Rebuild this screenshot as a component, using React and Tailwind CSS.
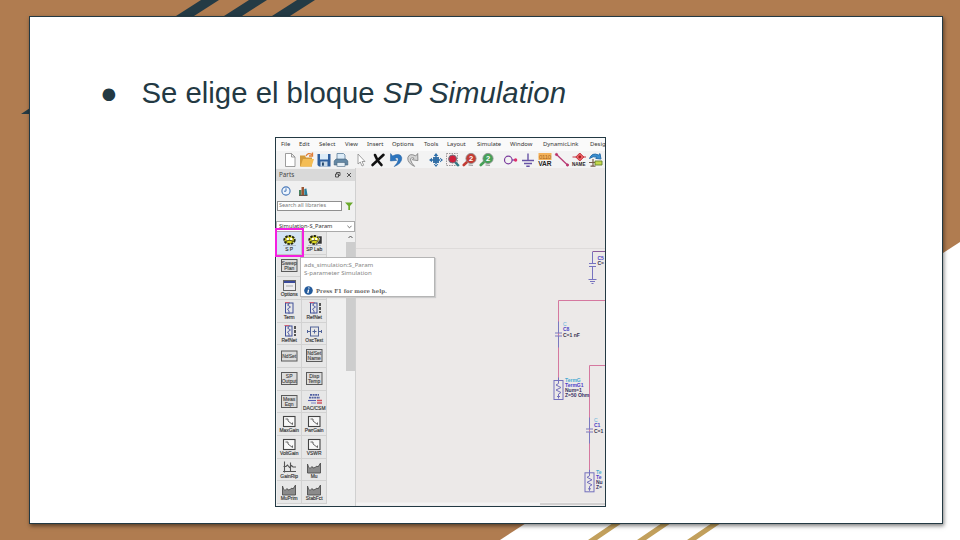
import React from "react";

const menus = [
  ["File", "w-[18px]"], ["Edit", "w-[20px]"], ["Select", "w-[26px]"], ["View", "w-[22px]"],
  ["Insert", "w-[25px]"], ["Options", "w-[32px]"], ["Tools", "w-[23px]"], ["Layout", "w-[30px]"],
  ["Simulate", "w-[33px]"], ["Window", "w-[33px]"], ["DynamicLink", "w-[47px]"], ["Desig", "w-[16px]"],
];

function Magnifier({ color, label }) {
  return (
    <g>
      <path d="M5.8 9.3 L1.8 13" stroke={color} strokeWidth="2.6" strokeLinecap="round" />
      <circle cx="9" cy="6.5" r="5.1" fill={color} stroke="#8b8b8b" strokeWidth=".8" />
      <text x="6.9" y="9.2" fontSize="7.5" fontWeight="bold" fill="#fff">{label}</text>
      <path d="M6.5 13 L11 13.3" stroke="#8d8d8d" strokeWidth="1" />
    </g>
  );
}

const tools = {
  page: <path d="M3.5 1.5 H9.5 L13 5 V14.5 H3.5 Z M9.5 1.5 V5 H13" fill="#fff" stroke="#858585" strokeWidth=".8" />,
  folder: (
    <g>
      <path d="M1 14.5 V3.5 H6 L7 5.5 H13 V14.5 Z" fill="#d39a3a" />
      <path d="M1.5 14.5 L4 7 H15 L12.5 14.5 Z" fill="#f4bd55" />
      <path d="M7 4 Q9 0 13 2.5 M13.5 .5 V4 H10" fill="none" stroke="#e07d35" strokeWidth="1.3" />
    </g>
  ),
  save: (
    <g>
      <path d="M1.5 2 H14.5 V14.5 H3 L1.5 13 Z" fill="#2e5f9e" />
      <rect x="4" y="2" width="8" height="5.5" fill="#dcecf8" />
      <rect x="4.5" y="9.5" width="7" height="5" fill="#c9d9e8" />
      <rect x="6" y="10.5" width="1.9" height="3.2" fill="#24496f" />
    </g>
  ),
  print: (
    <g>
      <path d="M4 7 V1.5 H10.5 L12 3 V7" fill="#dcecf8" stroke="#5d7e9a" strokeWidth=".8" />
      <path d="M3 7 H13 L14.8 9 V13 H1.2 V9 Z" fill="#6488a4" stroke="#3f6079" strokeWidth=".6" />
      <rect x="4" y="10.5" width="8" height="4" fill="#e7f0f6" stroke="#4d6c84" strokeWidth=".6" />
    </g>
  ),
  cursor: <path d="M5 2 V12 L7.3 10 L9 14 L10.7 13.2 L9 9.5 H12 Z" fill="#fff" stroke="#8a8a8a" strokeWidth=".8" />,
  del: <path d="M2.5 13 Q7 9 13.5 2.8 M5 3 Q7 9 11.5 13" fill="none" stroke="#111" strokeWidth="2.6" strokeLinecap="round" />,
  undo: <path d="M2.6 1.5 L2.4 9 L8.8 8.4 L7 6.4 Q10.6 4.8 10.2 8 Q9.8 11 6.2 14.6 Q14.2 11.2 13.8 5.8 Q12.5 .2 4.6 3.9 Z" fill="#2c75bf" stroke="#1f5a9a" strokeWidth=".5" />,
  redo: <path d="M12.7 1.5 L12.9 8.6 L7.4 7.8 L9 6.2 Q5.4 4.8 5.6 8 Q6.2 11 9.6 14.4 Q2.2 11 2.8 5.8 Q4.2 .6 10.8 3.9 Z" fill="#d4d4d4" stroke="#858585" strokeWidth=".9" />,
  move: (
    <g fill="#2e6ea8">
      <rect x="5" y="5" width="6" height="6" fill="#3f75a7" />
      <path d="M8 1 L10.3 4 H5.7 Z M8 15 L10.3 12 H5.7 Z M1 8 L4 5.7 V10.3 Z M15 8 L12 5.7 V10.3 Z M7.3 3 H8.7 V13 H7.3 Z M3 7.3 H13 V8.7 H3 Z" />
    </g>
  ),
  zoomArea: (
    <g>
      <rect x="1.5" y="1.5" width="11" height="12" fill="#f7eeee" stroke="#8f8f8f" strokeWidth=".9" strokeDasharray="1.5 1" />
      <path d="M10 10 L13.8 14" stroke="#2f7a86" strokeWidth="2.4" />
      <circle cx="7.6" cy="7" r="4" fill="#cf203a" stroke="#6b7782" strokeWidth="1" />
    </g>
  ),
  zoomIn: <Magnifier color="#c33c34" label="2" />,
  zoomOut: <Magnifier color="#46a157" label="2" />,
  port: (
    <g fill="none" stroke="#7a3a9c" strokeWidth="1.2">
      <circle cx="5.3" cy="8" r="3.8" /><path d="M9 8 H13" /><circle cx="12.6" cy="8" r="1.1" fill="#e0306c" stroke="#e0306c" />
    </g>
  ),
  ground: <path d="M8 1.5 V8 M2 8.5 H14 M4 11.5 H12 M6.3 14.3 H9.7" stroke="#6753a5" strokeWidth="1.4" />,
  variable: (
    <g>
      <rect x="1.5" y="1" width="13" height="7" fill="#f4b25a" />
      <text x="2" y="6.8" fontSize="6" textLength="12" fill="#a5651a">0110</text>
      <text x="1.2" y="14.4" fontSize="7" fontWeight="bold" textLength="13.4" lengthAdjust="spacingAndGlyphs" fill="#222">VAR</text>
    </g>
  ),
  wire: (
    <g stroke="#b73a75" fill="#c92d57"><path d="M2.5 2.5 L13.5 13" strokeWidth="1.3" /><circle cx="2.5" cy="2.5" r="1.1" /><circle cx="13.5" cy="13" r="1.1" /></g>
  ),
  name: (
    <g>
      <path d="M1.5 5 H15" stroke="#c53645" strokeWidth="1" />
      <path d="M8.8 1 L12.8 5 L8.8 9 L4.8 5 Z" fill="#ef686b" stroke="#c4303c" />
      <circle cx="8.8" cy="5" r="1.4" fill="#a52020" />
      <text x="1" y="14" fontSize="5.5" fontWeight="bold" textLength="13.5" lengthAdjust="spacingAndGlyphs" fill="#27191f">NAME</text>
    </g>
  ),
  rotate: (
    <g>
      <path d="M1.5 6.5 Q4 0 10.5 3 L12 1.6 L13 7 L7.8 6.4 L9 5.2 Q5 3.6 1.5 6.5 Z" fill="#398fd1" stroke="#2a70ac" strokeWidth="1" />
      <path d="M1 10.5 H7 M5 7 V14.5 M2.5 14.2 H7.5" stroke="#765b49" strokeWidth="1.2" />
      <path d="M7 9 H14 V13 H7 Z" fill="#c4d84a" stroke="#64852d" strokeWidth=".9" />
    </g>
  ),
};

const toolOrder = [
  ["page", "ml-[6px]"], ["folder", "ml-px"], ["save", "ml-px"], ["print", "ml-px"],
  ["cursor", "ml-[4px]"], ["del", "ml-px"], ["undo", "ml-[2px]"], ["redo", "ml-px"],
  ["move", "ml-[7px]"], ["zoomArea", "ml-px"], ["zoomIn", "ml-px"], ["zoomOut", "ml-px"],
  ["port", "ml-[8px]"], ["ground", "ml-px"], ["variable", "ml-px"], ["wire", "ml-px"],
  ["name", "ml-px"], ["rotate", "ml-px"],
];

const parts = [
  ["gear", "S P"], ["lab", "SP Lab"],
  ["box", "Sweep|Plan"], ["box", ""],
  ["window", "Options"], ["box", ""],
  ["term", "Term"], ["net", "RefNet"],
  ["net", "RefNet"], ["osc", "OscTest"],
  ["box", "NdSet"], ["box", "NdSet|Name"],
  ["box", "SP|Output"], ["box", "Disp|Temp"],
  ["box", "Meas|Eqn"], ["db", "DAC/CSM"],
  ["gain", "MaxGain"], ["gain", "PwrGain"],
  ["gain", "VoltGain"], ["gain", "VSWR"],
  ["ripple", "GainRip"], ["area", "Mu"],
  ["area", "MuPrim"], ["area", "StabFct"],
];

function PartGlyph({ kind }) {
  switch (kind) {
    case "gear":
    case "lab":
      return (
        <g>
          <ellipse cx="12.5" cy="8" rx="5.2" ry="4" fill="#d8d321" stroke="#25260f" strokeWidth="1.9" strokeDasharray="2.4 1" />
          <path d="M9 9.5 Q12.5 7 16 9.5" stroke="#4a4a15" strokeWidth="1.1" fill="none" />
          <circle cx="10.8" cy="7" r="1.2" fill="#fff" /><circle cx="14.2" cy="7" r="1.2" fill="#fff" />
          {kind === "lab" && <path d="M15.5 4 H20 V12 H14.5 L18 7 Z" fill="#333" stroke="#fff" strokeWidth=".5" />}
          <path d="M6 13.5 H19" stroke="#a9b4c4" strokeWidth=".8" />
        </g>
      );
    case "window":
      return (
        <g><rect x="6.5" y="3.5" width="12" height="10" fill="#ececf0" stroke="#666" /><path d="M7 5 H18" stroke="#39499b" strokeWidth="2" /><path d="M9 9 H16" stroke="#aaa" /></g>
      );
    case "term":
      return (
        <g fill="none"><rect x="8.5" y="3" width="7.5" height="10" stroke="#405098" /><path d="M12 2 V4 L10.5 5 L13.5 7 L10.5 9 L12 11 V14" stroke="#5963a8" /><path d="M8 2.5 H12.5" stroke="#cf5f75" /></g>
      );
    case "net":
      return (
        <g fill="none"><rect x="8.5" y="3" width="6.5" height="10" stroke="#405098" /><path d="M12 2 V4 L10.5 5 L13.5 7 L10.5 9 L12 11 V13.5" stroke="#5963a8" /><path d="M7.5 2.5 H12" stroke="#cf5f75" /><path d="M18 3 V13" stroke="#555" strokeWidth="2" strokeDasharray="3 1" /></g>
      );
    case "osc":
      return (
        <g fill="none" stroke="#526499"><rect x="8.5" y="4" width="8" height="9" /><path d="M5 8.5 H8 M17 8.5 H20 M10.5 8.5 H14.5 M12.5 6.5 V10.5" /><path d="M5.5 7 V10 M19.5 7 V10" /></g>
      );
    case "db":
      return (
        <g><path d="M8 3.8 H17 M7 6.6 H18" stroke="#5260a2" strokeWidth="1.8" strokeDasharray="2 .6" /><path d="M6 9.5 H14" stroke="#525baf" strokeWidth="1.1" /><path d="M15 9.5 H20 M15 12 H20" stroke="#ce5260" strokeWidth="1.6" /><path d="M9 12 H14" stroke="#7b83c4" /></g>
      );
    case "gain":
      return (
        <g fill="none"><rect x="6.5" y="3.5" width="11.5" height="10" fill="#f8f8f8" stroke="#444" strokeWidth="1.1" /><path d="M8.5 6 H11 V8 L15.5 11.5 M15.5 9.5 V11.5" stroke="#555" strokeWidth=".9" /></g>
      );
    case "ripple":
      return <path d="M7.5 2.5 V13.5 M6 12.5 H19 M13.5 3.5 V12 M6.5 7.5 H9 L10.5 6 L12.5 8.5 L14.5 6.5 L16 8 H19" fill="none" stroke="#555" strokeWidth="1.1" />;
    case "area":
      return <path d="M5.5 14 V5 L6.5 8 L8 9.5 L10 7.5 L11 9 L13 8.5 L15 7 L16 8 L18.5 4 V14 Z" fill="#8b8b8b" stroke="#4f4f4f" strokeWidth=".9" />;
    default:
      return null;
  }
}

function Part({ kind, label, active }) {
  const lines = label.split("|");
  const single = kind === "box" && lines.length === 1 && label !== "";
  return (
    <div className={active ? "bg-[#d4e4f5] border-r border-b border-[#c4c4c4]" : "bg-[#e7e7e7] border-r border-b border-[#d2d2d2]"}>
      <svg viewBox="0 0 24 22" className="block h-[22px] w-[24px]" fontFamily="Liberation Sans, sans-serif">
        {kind === "box" ? (
          <g fontSize="5" fill="#3f3f3f" stroke="#3f3f3f" strokeWidth=".12" textAnchor="middle">
            <rect x="4.5" y={single ? 6 : 4.5} width="15.5" height={single ? 10 : 12} fill="#dcdcdc" stroke="#5a5a5a" strokeWidth="1" />
            {lines.map((line, i) => (
              <text key={line} x="12.2" y={single ? 12.8 : 9.6 + i * 5.1}>{line}</text>
            ))}
          </g>
        ) : (
          <g>
            <PartGlyph kind={kind} />
            <text x="12.2" y="19.2" fontSize="4.9" textAnchor="middle" fill="#333" stroke="#333" strokeWidth=".15">{label}</text>
          </g>
        )}
      </svg>
    </div>
  );
}

function Terminal({ x, y, lines }) {
  const colors = ["#49a9d1", "#4e42c8", "#373062", "#373062"];
  return (
    <g transform={`translate(${x} ${y})`}>
      <g fill="none" stroke="#7470bd" strokeWidth="1">
        <rect x="-4.5" y="0" width="9" height="19" />
        <path d="M0 -3 V3 L-2.5 4.5 L2.5 7 L-2.5 9.5 L2.5 12 L0 13.5 V18 M-1.5 16 H1.5" />
      </g>
      <g fontSize="5" fontWeight="bold">
        {lines.map((line, i) => (
          <text key={i} x="6.5" y={1.5 + i * 5} fill={colors[i]}>{line}</text>
        ))}
      </g>
    </g>
  );
}

function Capacitor({ x, y, name, value }) {
  return (
    <g transform={`translate(${x} ${y})`}>
      <path d="M0 -13 V-1.5 M-3.5 -1.5 H3.5 M-3.5 1.5 H3.5 M0 1.5 V13" stroke="#7b78bf" fill="none" />
      <g fontSize="5">
        <text x="4.5" y="-8.5" fill="#62b3da">C</text>
        <text x="4.5" y="-3.4" fill="#4b43c5" fontWeight="bold">{name}</text>
        <text x="4.5" y="2" fill="#38324f" fontWeight="bold">{value}</text>
      </g>
    </g>
  );
}

function Schematic() {
  return (
    <svg viewBox="356 168 249 338" className="block h-[338px] w-[249px] bg-[#ece9e8]" fontFamily="Liberation Sans, sans-serif">
      <path d="M356 248.5 H605" stroke="#dedbda" />
      <path d="M605 251.5 H592.5" stroke="#8a5b9b" fill="none" />
      <path d="M592.5 252 V263 M589 263.5 H596 M589 266.5 H596 M592.5 267 V279 M588.5 279.5 H596.5 M590 281.5 H595 M591.5 283.5 H593.5" stroke="#7773bf" fill="none" />
      <g fontSize="5" fontWeight="bold">
        <text x="597.5" y="260" fill="#4b43c5">C5</text><text x="597.5" y="265.2" fill="#38324f">C=</text>
      </g>
      <path d="M605 300.5 H558.5 V378" fill="none" stroke="#d5789f" />
      <path d="M605 365.5 H589.5 V472" fill="none" stroke="#d5789f" />
      <Capacitor x={558.5} y={334.5} name="C8" value="C=1 nF" />
      <Capacitor x={589.5} y={430.5} name="C1" value="C=1" />
      <Terminal x={558.5} y={380.5} lines={["TermG", "TermG1", "Num=1", "Z=50 Ohm"]} />
      <Terminal x={589.5} y={472.8} lines={["Te", "Te", "Nu", "Z="]} />
      <path d="M356 504 H605" stroke="#f4f3f3" strokeWidth="3" />
      <path d="M540 504 H605" stroke="#c7c5c5" strokeWidth="1.6" />
    </svg>
  );
}

function PartsPanel() {
  return (
    <div className="flex h-[338px] w-[80px] flex-col border-r border-[#d0d0d0] bg-[#f0f0f0] text-[6px] text-[#444]">
      <div className="mt-px flex h-[12px] items-center bg-[#d9d9d9] pl-[3px] text-[6.3px]">
        <span className="w-[55px]">Parts</span>
        <svg viewBox="0 0 20 8" className="h-[8px] w-[20px]" fill="none" stroke="#444" strokeWidth=".9">
          <path d="M1.5 3 H4.5 V6 H1.5 Z M2.5 3 V1.5 H6 V4.5 H4.5 M13 2 L17 6 M17 2 L13 6" />
        </svg>
      </div>
      <div className="flex h-[19px] items-center gap-[7px] pl-[5px]">
        <svg viewBox="0 0 10 10" className="size-[10px]"><circle cx="5" cy="5" r="4.1" fill="#eef5fd" stroke="#4878b8" strokeWidth="1.1" /><path d="M5 2.3 V5.2 H3" fill="none" stroke="#4878b8" /></svg>
        <svg viewBox="0 0 10 10" className="size-[10px]"><path d="M1 4 H3.5 V9 H1 Z" fill="#48815e" /><path d="M3.5 1 H6 V9 H3.5 Z" fill="#9c5632" /><path d="M6.3 3 L8.4 2.5 L9.5 9 H6.3 Z" fill="#277f9b" /><path d="M1 9.4 H9.5" stroke="#574136" /></svg>
      </div>
      <div className="flex h-[11px] items-center gap-[3px] pl-px">
        <div className="flex h-[10px] w-[65px] items-center border border-[#909090] bg-white pl-px text-[5.5px] whitespace-nowrap text-[#777]">Search all libraries</div>
        <svg viewBox="0 0 8 8" className="size-[8px]"><path d="M0 .5 H8 L5 4 V8 H3.3 V4 Z" fill="#6ba92c" /></svg>
      </div>
      <div className="mt-[10px] flex h-[11px] items-center justify-between border border-[#aaa] bg-white px-[2px] text-[5.7px] text-[#333]">
        <span className="whitespace-nowrap">Simulation-S_Param</span>
        <svg viewBox="0 0 6 4" className="h-[4px] w-[5px]" fill="none" stroke="#555"><path d="M.5 .5 L3 3 L5.5 .5" /></svg>
      </div>
      <div className="flex h-[274px] overflow-hidden">
        <div className="ml-px grid h-[272px] w-[50px] grid-cols-2 grid-rows-12">
          {parts.map(([kind, label], i) => <Part key={i} kind={kind} label={label} active={i === 0} />)}
        </div>
        <div className="ml-auto flex w-[9px] flex-col bg-[#f0f0f0]">
          <svg viewBox="0 0 9 10" className="h-[10px] w-[9px]" fill="none" stroke="#555"><path d="M2.5 6 L4.5 4 L6.5 6" /></svg>
          <div className="h-[129px] bg-[#cdcdcd]" />
        </div>
      </div>
    </div>
  );
}

function DesignWindow() {
  return (
    <div className="relative h-[370px] w-[331px] border border-[#233943] bg-[#f0f0f0] font-['Noto_Sans','Open_Sans',sans-serif]">
      <div className="h-full w-full overflow-hidden">
        <div className="flex h-[13px] items-center bg-[#fafafa] pl-[5px] text-[5.9px] text-[#333]">
          {menus.map(([label, width]) => <span key={label} className={`${width} shrink-0 whitespace-nowrap`}>{label}</span>)}
        </div>
        <div className="flex h-[17px] items-center bg-[#f3f3f3]">
          {toolOrder.map(([key, gap]) => (
            <svg key={key} viewBox="0 0 16 16" className={`${gap} size-[16px] shrink-0`} fontFamily="Liberation Sans, sans-serif">{tools[key]}</svg>
          ))}
        </div>
        <div className="flex">
          <PartsPanel />
          <Schematic />
        </div>
      </div>
      <div className="absolute top-[119px] left-[24px] h-[40px] w-[135px] border border-[#b5b5b5] bg-white pt-[3px] pl-[3px] text-[6.1px] leading-[8px] text-[#858585] shadow-[1px_1px_1px_#ccc]">
        <div>ads_simulation:S_Param</div>
        <div>S-parameter Simulation</div>
        <div className="mt-[9px] flex items-center gap-[3px] font-['DejaVu_Serif',serif] text-[5.4px] font-bold text-[#666]">
          <svg viewBox="0 0 9 9" className="size-[9px]"><circle cx="4.5" cy="4.5" r="4.3" fill="#235a9b" /><path d="M5 1.5 L4.8 2.5 M4.6 3.7 L3.8 7.2" stroke="#fff" strokeWidth="1.3" /></svg>
          <span className="whitespace-nowrap">Press F1 for more help.</span>
        </div>
      </div>
      <div className="absolute top-[90px] -left-px h-[29px] w-[29px] border-2 border-[#f51fe0]" />
    </div>
  );
}

export default function App() {
  return (
    <div className="relative h-[540px] w-[960px] overflow-hidden bg-white px-[29px] pt-[16px]">
      <svg viewBox="0 0 960 540" className="absolute inset-0 h-[540px] w-[960px]">
        <path d="M0 0 H960 V242 L500 540 H0 Z" fill="#b07c50" />
        <g fill="#243b45">
          <path d="M201 0 H219 L194 16 H176 Z M249 0 H267 L242 16 H224 Z M297 0 H315 L290 16 H272 Z M21 114 L30 108 V114 Z" />
        </g>
        <path d="M613 523 H622 L597 540 H588 Z M662 523 H671 L646 540 H637 Z M712 523 H721 L696 540 H687 Z" fill="#c2a05c" />
      </svg>
      <main className="relative h-[508px] w-[914px] border border-[#233943] bg-white pt-[59px] shadow-[1px_2px_4px_rgba(0,0,0,0.5)]">
        <div className="flex h-[34px] items-center pl-[70px] font-['Liberation_Sans',Arial,sans-serif] text-[29.33px] leading-[34px] text-[#233943]">
          <span className="w-[41.5px]">●</span>
          <h1 className="whitespace-nowrap">Se elige el bloque <em>SP Simulation</em></h1>
        </div>
        <div className="mt-[27px] ml-[245px]">
          <DesignWindow />
        </div>
      </main>
    </div>
  );
}
